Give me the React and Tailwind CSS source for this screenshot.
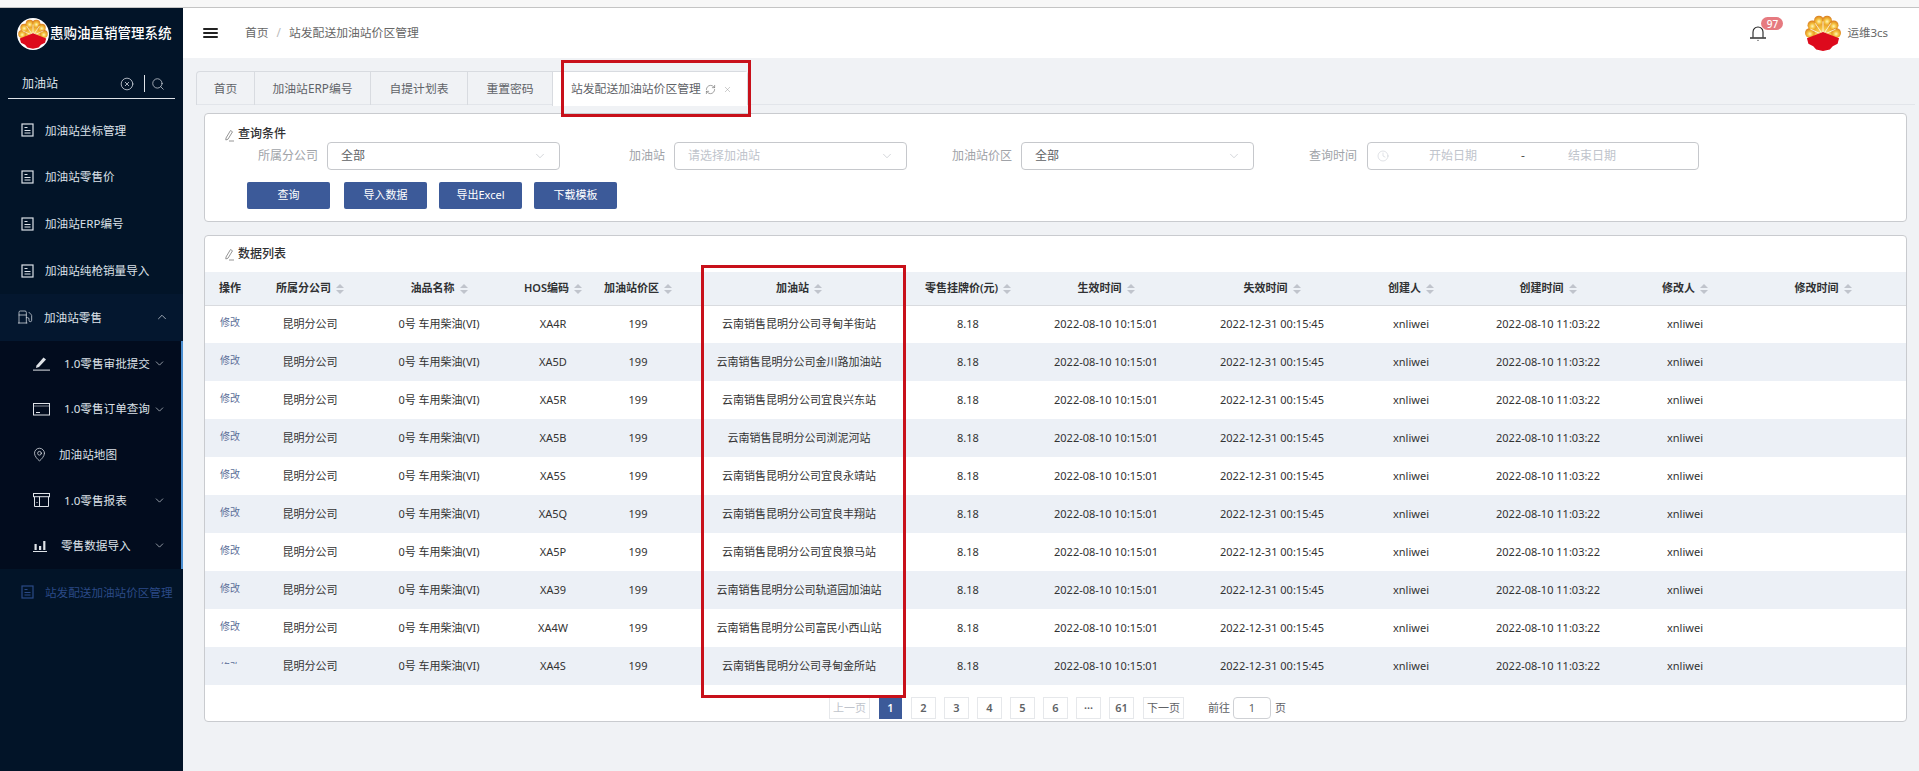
import React, { useId } from "react";
import { Search, CircleX, ChevronUp, ChevronDown, MapPin, RefreshCw, X, Clock, Fuel } from "lucide-react";

function Logo({ size = 34, ring = false }) {
  const id = useId();
  const angles = [180, 216, 252, 288, 324, 360];
  return (
    <svg width={size} height={size} viewBox={ring ? "0 0 40 40" : "1.5 1.5 37 37"} className="shrink-0">
      <defs>
        <radialGradient id={id} cx="50%" cy="60%" r="60%">
          <stop offset="0" stopColor="#fff7b8" />
          <stop offset="0.45" stopColor="#f4bf3c" />
          <stop offset="1" stopColor="#d8781c" />
        </radialGradient>
      </defs>
      {ring && <circle cx="20" cy="20" r="20" fill="#fff" />}
      <g fill={`url(#${id})`}>
        <circle cx="20" cy="20" r="15.5" />
        {angles.map((a) => (
          <circle key={a} cx={20 + 13.5 * Math.cos((a * Math.PI) / 180)} cy={20 + 13.5 * Math.sin((a * Math.PI) / 180)} r="5" />
        ))}
      </g>
      <g stroke="#fff" strokeWidth="0.9" opacity="0.85">
        <line x1="20" y1="22" x2="20" y2="8" />
        <line x1="20" y1="22" x2="12" y2="10" />
        <line x1="20" y1="22" x2="28" y2="10" />
        <line x1="20" y1="22" x2="7" y2="16" />
        <line x1="20" y1="22" x2="33" y2="16" />
      </g>
      <path d="M3.5 25.5 L20 19 L36.5 25.5 L35 31 L30 33.5 L27 37 L20 38.5 L13 37 L10 33.5 L5 31 Z" fill="#dd0a1c" />
    </svg>
  );
}

function DocIcon({ className = "" }) {
  return (
    <svg width="13" height="14" viewBox="0 0 13 14" fill="none" stroke="currentColor" strokeWidth="1.2" className={className}>
      <rect x="1" y="1" width="11" height="12" />
      <path d="M3.5 4.5h3M3.5 7.5h6M3.5 10h6" />
    </svg>
  );
}

function EditIcon() {
  return (
    <svg width="10" height="13" viewBox="0 0 10 13" fill="none" stroke="#8a8a8a" strokeWidth="0.9" className="shrink-0">
      <path d="M2 9 L6.5 1.5 L8.5 2.8 L4 10.2 L1.8 11 Z" />
      <path d="M5 12h5" />
    </svg>
  );
}

function SortIcon() {
  return (
    <span className="inline-flex flex-col gap-[2px] ml-[5px] align-middle shrink-0">
      <span className="w-0 h-0 border-x-[4px] border-x-transparent border-b-[4px] border-b-[#c0c4cc]" />
      <span className="w-0 h-0 border-x-[4px] border-x-transparent border-t-[4px] border-t-[#c0c4cc]" />
    </span>
  );
}

function SelectBox({ text, placeholder, width }) {
  return (
    <div className={`${width} h-[28px] border border-[#c6c8cc] rounded-[4px] flex items-center justify-between pl-[13px] pr-[12px] text-[12px] ${placeholder ? "text-[#c0c4cc]" : "text-[#606266]"}`}>
      <span>{text}</span>
      <ChevronDown size={14} strokeWidth={1} className="text-[#b5b8bf]" />
    </div>
  );
}

const menuTop = ["加油站坐标管理", "加油站零售价", "加油站ERP编号", "加油站纯枪销量导入"];

const PencilLine = () => (
  <svg width="17" height="15" viewBox="0 0 17 15" fill="#dfe3e8" className="shrink-0">
    <path d="M3.5 9.5 L10.5 1.5 L13 3.5 L6 11 L3 12 Z" />
    <rect x="0" y="13.6" width="17" height="1" />
  </svg>
);
const CardIcon = () => (
  <svg width="17" height="13" viewBox="0 0 17 13" fill="none" stroke="#dfe3e8" strokeWidth="1" className="shrink-0">
    <rect x="0.5" y="0.5" width="16" height="11.5" />
    <path d="M3 9.5h4" />
    <path d="M0.5 3h16" strokeWidth="0.6" />
  </svg>
);
const TableIcon = () => (
  <svg width="17" height="14" viewBox="0 0 17 14" fill="none" stroke="#dfe3e8" strokeWidth="1" className="shrink-0">
    <rect x="0.5" y="0.5" width="16" height="3.2" />
    <path d="M1.5 3.7V13.5H15.5V3.7M6.5 3.7V13.5" />
    <path d="M4 9v1" />
  </svg>
);
const BarsIcon = () => (
  <svg width="14" height="12" viewBox="0 0 14 12" fill="#dfe3e8" className="shrink-0">
    <rect x="1.5" y="4" width="2.2" height="6" />
    <rect x="6" y="6" width="2.2" height="4" />
    <rect x="10.2" y="1" width="2.2" height="9" />
    <rect x="0" y="11" width="14" height="1" />
  </svg>
);

const subMenu = [
  { icon: <PencilLine />, label: "1.0零售审批提交", iw: "w-[31px]", arrow: true },
  { icon: <CardIcon />, label: "1.0零售订单查询", iw: "w-[31px]", arrow: true },
  { icon: <MapPin size={15} strokeWidth={1.2} className="text-[#dfe3e8] shrink-0 ml-[-1px]" />, label: "加油站地图", iw: "w-[26px]", arrow: false },
  { icon: <TableIcon />, label: "1.0零售报表", iw: "w-[31px]", arrow: true },
  { icon: <BarsIcon />, label: "零售数据导入", iw: "w-[28px]", arrow: true },
];

function Sidebar() {
  return (
    <aside className="w-[183px] shrink-0 bg-[#021428] text-[#dce1e8] text-[11.6px]">
      <div className="h-[50px] flex items-center pl-[17px] pt-[1px]">
        <Logo size={32} ring />
        <span className="text-[13.5px] font-medium text-white whitespace-nowrap ml-[1px]">惠购油直销管理系统</span>
      </div>
      <div className="mx-[8px] h-[41px] mt-0 border-b border-[#dfe3e8] flex items-center pt-[11px] pl-[14px] text-[12px]">
        <span>加油站</span>
        <CircleX size={14} strokeWidth={1.3} className="ml-auto" />
        <span className="w-px h-[17px] bg-[#dfe3e8] ml-[10px]" />
        <Search size={14} strokeWidth={1.2} className="ml-[6px] mr-[10px]" />
      </div>
      <nav className="mt-[8px]">
        {menuTop.map((m) => (
          <div key={m} className="h-[46.75px] flex items-center pl-[21px] gap-[11px] whitespace-nowrap">
            <DocIcon />
            <span>{m}</span>
          </div>
        ))}
        <div className="h-[46.75px] flex items-center pl-[17px] pr-[14px] bg-[#04172f]">
          <Fuel size={16} strokeWidth={1.1} />
          <span className="ml-[11px]">加油站零售</span>
          <ChevronUp size={14} strokeWidth={1.2} className="ml-auto" />
        </div>
        <div className="bg-[#020c1e] border-r-[2px] border-[#4b8ed0]">
          {subMenu.map((s) => (
            <div key={s.label} className="h-[45.6px] flex items-center pl-[33px] pr-[15px] whitespace-nowrap">
              <span className={`${s.iw} flex items-center shrink-0`}>{s.icon}</span>
              <span>{s.label}</span>
              {s.arrow && <ChevronDown size={13} strokeWidth={1.2} className="ml-auto shrink-0" />}
            </div>
          ))}
        </div>
        <div className="h-[47px] flex items-center pl-[21px] gap-[11px] whitespace-nowrap text-[#2b4a86]">
          <DocIcon />
          <span>站发配送加油站价区管理</span>
        </div>
      </nav>
    </aside>
  );
}

function BellIcon() {
  return (
    <svg width="18" height="16" viewBox="0 0 18 16" fill="none" stroke="#222" strokeWidth="1.1">
      <path d="M4 12.5V7a5 5 0 0 1 10 0v5.5" />
      <path d="M1 13h16" strokeWidth="1.4" />
      <circle cx="9" cy="15.3" r="0.6" fill="#222" stroke="none" />
    </svg>
  );
}

function Header() {
  return (
    <header className="h-[50px] bg-white flex items-center shrink-0 text-[11.8px] text-[#666]">
      <div className="ml-[20px] flex flex-col gap-[2px] w-[15px]">
        <span className="h-[2px] bg-[#222] rounded-sm" />
        <span className="h-[2px] w-[15px] bg-[#222] rounded-sm" />
        <span className="h-[2px] bg-[#222] rounded-sm" />
      </div>
      <span className="ml-[27px]">首页</span>
      <span className="mx-[8px] text-[#bbb]">/</span>
      <span>站发配送加油站价区管理</span>
      <div className="ml-auto relative mr-[38px]">
        <BellIcon />
        <span className="absolute left-[12px] top-[-8px] w-[22px] h-[13px] rounded-full bg-[#e67a80] text-white text-[10px] font-medium flex items-center justify-center leading-none">97</span>
      </div>
      <Logo size={36} />
      <span className="ml-[6px] mr-[31px] text-[11.5px] text-[#666] whitespace-nowrap">运维3cs</span>
    </header>
  );
}

const tabs = [
  ["首页", "w-[57px]"],
  ["加油站ERP编号", "w-[116px]"],
  ["自提计划表", "w-[97px]"],
  ["重置密码", "w-[85px]"],
];

function Tabs() {
  return (
    <div className="mt-[13px] ml-[13px] h-[34px] border-b border-[#e2e5ea] flex items-stretch text-[11.8px] text-[#5f6368] mr-[4px]">
      <div className="flex border border-b-0 border-[#d8dbe0] rounded-t-[4px] h-[34px]">
        {tabs.map(([t, w], i) => (
          <div key={t} className={`${w} flex items-center justify-center ${i > 0 ? "border-l border-[#d8dbe0]" : ""}`}>{t}</div>
        ))}
        <div className="w-[195px] h-[34px] bg-white border-l border-[#d8dbe0] flex items-center pl-[18px]">
          <span className="whitespace-nowrap">站发配送加油站价区管理</span>
          <RefreshCw size={11} strokeWidth={1.5} className="ml-[4px] text-[#777]" />
          <X size={9} strokeWidth={1.3} className="ml-[7px] text-[#999]" />
        </div>
      </div>
    </div>
  );
}

function QueryCard() {
  return (
    <section className="ml-[21px] mr-[12px] mt-[8px] h-[109px] bg-white border border-[#c9cbcf] rounded-[4px]">
      <div className="h-[28px] flex items-end pl-[19px] gap-[4px] text-[12px] font-medium text-[#303133]">
        <EditIcon />
        <span className="leading-[16px]">查询条件</span>
      </div>
      <div className="flex items-center text-[12px] text-[#a0a3a8] whitespace-nowrap">
        <span className="ml-[53px] w-[58px] text-right">所属分公司</span>
        <span className="ml-[11px]"><SelectBox text="全部" width="w-[233px]" /></span>
        <span className="ml-[69px]">加油站</span>
        <span className="ml-[9px]"><SelectBox text="请选择加油站" placeholder width="w-[233px]" /></span>
        <span className="ml-[45px]">加油站价区</span>
        <span className="ml-[9px]"><SelectBox text="全部" width="w-[233px]" /></span>
        <span className="ml-[55px]">查询时间</span>
        <span className="ml-[10px] w-[332px] h-[28px] border border-[#c6c8cc] rounded-[4px] flex items-center pl-[9px] text-[#c0c4cc]">
          <Clock size={12} strokeWidth={1} />
          <span className="ml-[40px]">开始日期</span>
          <span className="ml-[44px] text-[#555]">-</span>
          <span className="ml-[43px]">结束日期</span>
        </span>
      </div>
      <div className="mt-[12px] ml-[42px] flex text-[11px] text-white">
        <div className="w-[83px] h-[27px] bg-[#3c5a99] rounded-[2px] flex items-center justify-center">查询</div>
        <div className="ml-[14px] w-[83px] h-[27px] bg-[#3c5a99] rounded-[2px] flex items-center justify-center">导入数据</div>
        <div className="ml-[12px] w-[83px] h-[27px] bg-[#3c5a99] rounded-[2px] flex items-center justify-center">导出Excel</div>
        <div className="ml-[12px] w-[83px] h-[27px] bg-[#3c5a99] rounded-[2px] flex items-center justify-center">下载模板</div>
      </div>
    </section>
  );
}

const columns = [
  ["所属分公司", "w-[104px]"],
  ["油品名称", "w-[154px]"],
  ["HOS编码", "w-[74px]"],
  ["加油站价区", "w-[96px]"],
  ["加油站", "w-[226px]"],
  ["零售挂牌价(元)", "w-[112px]"],
  ["生效时间", "w-[164px]"],
  ["失效时间", "w-[168px]"],
  ["创建人", "w-[110px]"],
  ["创建时间", "w-[164px]"],
  ["修改人", "w-[110px]"],
];

const rows = [
  ["XA4R", "云南销售昆明分公司寻甸羊街站"],
  ["XA5D", "云南销售昆明分公司金川路加油站"],
  ["XA5R", "云南销售昆明分公司宜良兴东站"],
  ["XA5B", "云南销售昆明分公司浏泥河站"],
  ["XA5S", "云南销售昆明分公司宜良永靖站"],
  ["XA5Q", "云南销售昆明分公司宜良丰翔站"],
  ["XA5P", "云南销售昆明分公司宜良狼马站"],
  ["XA39", "云南销售昆明分公司轨道园加油站"],
  ["XA4W", "云南销售昆明分公司富民小西山站"],
  ["XA4S", "云南销售昆明分公司寻甸金所站"],
];

function DataCard() {
  return (
    <section className="ml-[21px] mr-[12px] mt-[13px] h-[487px] bg-white border border-[#c9cbcf] rounded-[4px]">
      <div className="h-[36px] flex items-center pl-[19px] gap-[4px] text-[12px] font-medium text-[#303133]">
        <EditIcon />
        <span>数据列表</span>
      </div>
      <table className="table-fixed w-full text-[11px] text-[#333] border-collapse">
        <colgroup>
          <col className="w-[53px]" />
          {columns.map(([c, w]) => <col key={c} className={w} />)}
          <col />
        </colgroup>
        <thead>
          <tr className="h-[33px] bg-[#edf1f6] border-b border-[#d9dbdf] text-[#303133]">
            <th className="text-left pl-[14px] font-semibold whitespace-nowrap">操作</th>
            {columns.map(([c]) => (
              <th key={c} className="font-semibold whitespace-nowrap text-center">
                {c}<SortIcon />
              </th>
            ))}
            <th className="font-semibold whitespace-nowrap text-center">修改时间<SortIcon /></th>
          </tr>
        </thead>
        <tbody>
          {rows.map(([code, name], i) => (
            <tr key={code} className={`h-[38px] text-center ${i % 2 ? "bg-[#ecf0f6]" : "bg-white"}`}>
              <td className="text-left pl-[15px] text-[10px] text-[#5c6f99]">
                {i === 9 ? (
                  <span className="block h-[4px] overflow-hidden mb-[8px] leading-[14px]">修改</span>
                ) : (
                  <span className="block mb-[3px]">修改</span>
                )}
              </td>
              <td>昆明分公司</td>
              <td>0号 车用柴油(VI)</td>
              <td>{code}</td>
              <td>199</td>
              <td className="whitespace-nowrap">{name}</td>
              <td>8.18</td>
              <td className="whitespace-nowrap">2022-08-10 10:15:01</td>
              <td className="whitespace-nowrap">2022-12-31 00:15:45</td>
              <td>xnliwei</td>
              <td className="whitespace-nowrap">2022-08-10 11:03:22</td>
              <td>xnliwei</td>
              <td />
            </tr>
          ))}
        </tbody>
      </table>
      <div className="mt-[12px] ml-[624px] flex items-center text-[11px] font-semibold text-[#606266]">
        <div className="w-[41px] h-[22px] border border-[#e6e8eb] flex items-center justify-center text-[#c0c4cc] font-normal">上一页</div>
        <div className="ml-[9px] w-[23px] h-[22px] bg-[#3c5a99] text-white flex items-center justify-center">1</div>
        <div className="ml-[9px] flex gap-[8px]">
          {["2", "3", "4", "5", "6", "···", "61"].map((p) => (
            <div key={p} className="w-[25px] h-[22px] border border-[#e6e8eb] flex items-center justify-center">{p}</div>
          ))}
        </div>
        <div className="ml-[9px] w-[41px] h-[22px] border border-[#e6e8eb] flex items-center justify-center font-normal">下一页</div>
        <span className="ml-[24px] font-normal">前往</span>
        <div className="ml-[3px] w-[38px] h-[22px] border border-[#cfd1d5] rounded-[4px] flex items-center justify-center font-normal">1</div>
        <span className="ml-[4px] font-normal">页</span>
      </div>
    </section>
  );
}

export default function App() {
  return (
    <div className="relative w-[1919px] h-[771px] overflow-hidden bg-[#f0f2f5] font-['Noto_Sans','Noto_Sans_CJK_SC',sans-serif]">
      <div className="h-[8px] bg-[#f7f7f7] border-b border-[#c4c4c4]" />
      <div className="flex h-[763px]">
        <Sidebar />
        <main className="flex-1 min-w-0 flex flex-col">
          <Header />
          <Tabs />
          <QueryCard />
          <DataCard />
        </main>
      </div>
      <div className="absolute left-[561px] top-[60px] w-[190px] h-[57px] border-[3px] border-[#c8101a] pointer-events-none" />
      <div className="absolute left-[701px] top-[265px] w-[205px] h-[433px] border-[3px] border-[#c8101a] pointer-events-none" />
    </div>
  );
}
